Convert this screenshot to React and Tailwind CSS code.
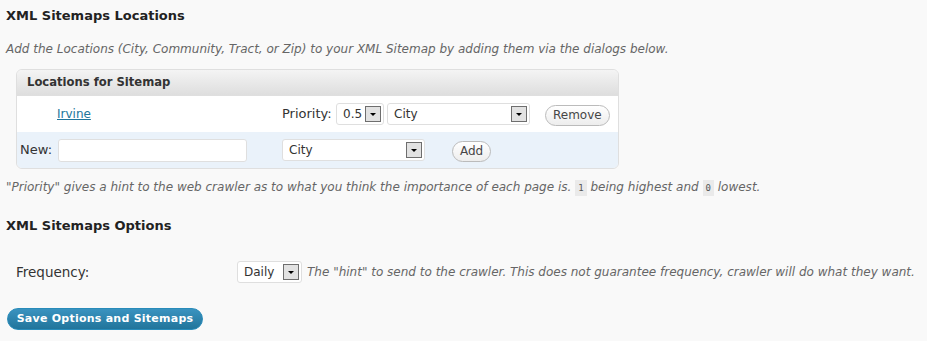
import React from "react";

const font = { fontFamily: '"DejaVu Sans", Verdana, sans-serif' };

function Select({ value, width }) {
  return (
    <div
      className={`flex items-center justify-between h-[22px] bg-white border border-[#dfdfdf] rounded-[3px] pl-[6px] pr-[2px] ${width}`}
    >
      <span className="text-[12px] text-[#333]">{value}</span>
      <span className="w-[16px] h-[16px] border border-[#6e6e6e] bg-[#e2e2e2] flex items-center justify-center">
        <svg width="8" height="5" viewBox="0 0 8 5">
          <path d="M1 1 L7 1 L4 4 Z" fill="#000" />
        </svg>
      </span>
    </div>
  );
}

function PillButton({ label }) {
  return (
    <button className="h-[21px] px-[7px] rounded-full border border-[#bbb] bg-gradient-to-b from-white to-[#ededed] text-[12px] text-[#464646] leading-[19px]">
      {label}
    </button>
  );
}

export default function App() {
  return (
    <div className="w-[927px] h-[341px] bg-[#f9f9f9] text-[#333] overflow-hidden" style={font}>
      <div className="pt-[7px] pl-[6px]">
        <h2 className="text-[13px] font-bold text-[#222] leading-[17px]">XML Sitemaps Locations</h2>
        <p className="mt-[18px] text-[12px] italic text-[#666] leading-[15px]">
          Add the Locations (City, Community, Tract, or Zip) to your XML Sitemap by adding them via the dialogs below.
        </p>
      </div>

      <div className="ml-[16px] mt-[12px] w-[603px] border border-[#dfdfdf] rounded-[6px] overflow-hidden">
        <div className="h-[26px] bg-gradient-to-b from-[#f4f4f4] to-[#dedede] flex items-center pl-[10px] border-b border-[#dfdfdf]">
          <span className="text-[11.6px] font-bold text-[#333]">Locations for Sitemap</span>
        </div>
        <div className="h-[36px] bg-white flex items-center">
          <a href="#" className="ml-[40px] w-[225px] text-[12px] text-[#21759b] underline">Irvine</a>
          <span className="w-[54px] text-[13px] text-[#333]">Priority:</span>
          <Select value="0.5" width="w-[48px]" />
          <div className="ml-[3px]">
            <Select value="City" width="w-[143px]" />
          </div>
          <div className="ml-[15px]">
            <PillButton label="Remove" />
          </div>
        </div>
        <div className="h-[36px] bg-[#eaf2fa] flex items-center">
          <span className="ml-[3px] w-[38px] text-[13px] text-[#333]">New:</span>
          <input className="w-[189px] h-[23px] bg-white border border-[#dfdfdf] rounded-[3px]" />
          <div className="ml-[35px]">
            <Select value="City" width="w-[143px]" />
          </div>
          <div className="ml-[27px]">
            <PillButton label="Add" />
          </div>
        </div>
      </div>

      <p className="mt-[11px] ml-[6px] text-[12px] italic text-[#666] leading-[15px]">
        "Priority" gives a hint to the web crawler as to what you think the importance of each page is.{" "}
        <code className="not-italic font-['DejaVu_Sans_Mono'] text-[9px] text-[#555] bg-[#eaeaea] px-[3px] py-[3px]">1</code>{" "}
        being highest and{" "}
        <code className="not-italic font-['DejaVu_Sans_Mono'] text-[9px] text-[#555] bg-[#eaeaea] px-[3px] py-[3px]">0</code>{" "}
        lowest.
      </p>

      <h2 className="mt-[21px] ml-[6px] text-[13px] font-bold text-[#222] leading-[17px]">XML Sitemaps Options</h2>

      <div className="mt-[26px] flex items-center h-[24px]">
        <span className="ml-[16px] w-[221px] text-[13.5px] text-[#333]">Frequency:</span>
        <Select value="Daily" width="w-[65px]" />
        <span className="ml-[5px] text-[12px] italic text-[#666]">
          The "hint" to send to the crawler. This does not guarantee frequency, crawler will do what they want.
        </span>
      </div>

      <button className="block mt-[24px] ml-[7px] h-[22px] w-[196px] rounded-full border border-[#298cba] bg-gradient-to-b from-[#3a93c0] to-[#21759b] text-white text-[11px] font-bold tracking-[0.25px]">
        Save Options and Sitemaps
      </button>
    </div>
  );
}
